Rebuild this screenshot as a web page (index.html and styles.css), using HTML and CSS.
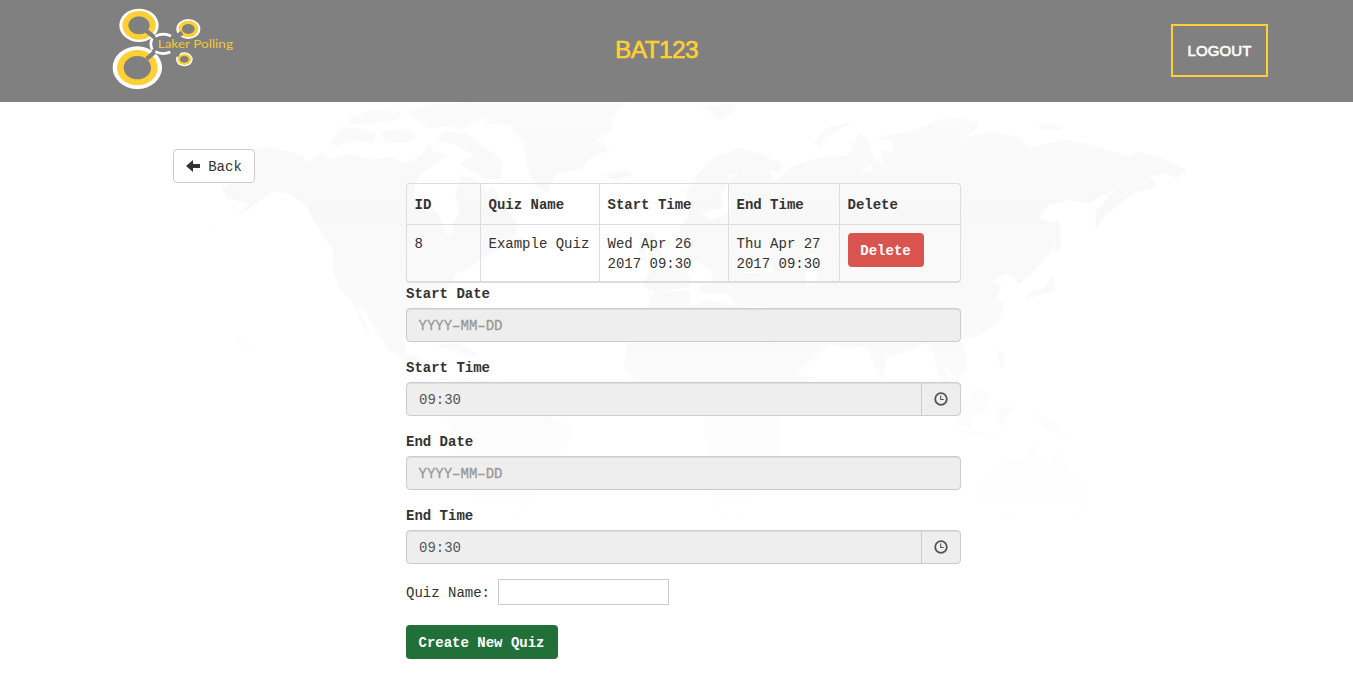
FILE: index.html
```html
<!DOCTYPE html>
<html lang="en">
<head>
<meta charset="utf-8">
<title>Laker Polling</title>
<link rel="stylesheet" href="styles.css">
</head>
<body>
<svg class="world-map" viewBox="0 0 1353 693" aria-hidden="true">
  <defs>
    <linearGradient id="fade" gradientUnits="userSpaceOnUse" x1="0" y1="100" x2="0" y2="540">
      <stop offset="0" stop-color="#fbfbfb"/><stop offset=".25" stop-color="#f8f8f8"/><stop offset=".55" stop-color="#fafafa"/><stop offset=".8" stop-color="#fdfdfd"/><stop offset="1" stop-color="#fff"/>
    </linearGradient>
    <clipPath id="land">
      <path transform="translate(190 100) scale(.33333)" d="M190 148L230 140L300 155L340 165L345 190L400 155L400 170L430 178L480 160L540 180L600 170L650 190L690 170L720 130L730 155L770 165L740 190L700 215L680 240L670 290L700 310L745 340L765 400L790 405L790 365L810 340L795 280L815 225L860 240L890 275L910 260L935 310L980 365L975 410L920 420L950 440L900 460L860 490L800 520L770 570L735 600L720 640L745 680L740 710L725 685L680 690L640 710L650 760L690 770L690 790L740 835L790 840L745 845L680 795L600 755L575 720L545 670L520 620L500 620L540 695L525 690L485 600L450 570L430 520L430 450L400 410L370 360L350 320L300 280L245 275L200 310L140 350L180 310L110 295L95 265L150 240L130 210L150 190Z
      M420 125L460 80L520 85L560 100L545 130L500 120L440 138ZM480 55L540 30L640 35L620 60L530 75L475 70ZM570 95L650 85L680 110L650 130L590 130ZM645 30L760 10L900 5L960 20L850 70L810 90L790 75L720 85L680 60ZM760 95L830 100L880 140L940 180L930 235L890 240L840 210L810 190L850 165L800 135L740 120Z
      M850 5L1310 5L1260 60L1270 90L1220 120L1260 150L1190 180L1180 205L1100 220L1070 280L1040 265L1015 210L1000 130L960 75L880 70L910 40ZM1250 220L1310 210L1325 225L1280 243L1250 232ZM940 415L1000 415L1010 435L970 440ZM1360 400L1385 395L1420 470L1380 480L1390 430ZM1350 430L1375 420L1365 460L1340 460ZM1370 520L1490 490L1500 560L1400 580L1360 560ZM1390 580L1500 570V945L1400 925L1330 840L1300 790L1320 700L1370 620ZM730 735L800 730L840 750L870 770L800 755ZM800 835L890 830L960 860L1000 910L1090 955L1150 980L1140 1020L1100 1070L1040 1120L1030 1190L970 1260L860 1260L860 1130L800 1070L770 950Z
      M140 710L155 718L148 725ZM165 725L182 735L175 742ZM65 375L75 371L70 380Z"/>
      <path transform="translate(680 100) scale(.338 .33333)" d="M0 380L25 350L20 270L50 225L100 170L180 145L220 155L300 190L300 215L260 210L280 245L330 200L390 180L430 170L500 165L530 100L555 115L580 190L530 210L560 215L580 175L605 200L590 150L630 155L625 120L580 120L610 105L680 95L740 70L800 50L880 65L885 85L830 115L920 95L1000 110L1030 145L1130 120L1200 130L1330 170L1350 155L1430 175L1500 210L1470 235L1430 220L1390 230L1410 260L1340 280L1300 310L1250 355L1230 390L1230 335L1290 265L1210 310L1150 300L1090 315L1060 355L1105 370L1105 440L1050 510L1000 555L990 530L960 520L920 545L950 560L935 600L960 610L945 660L900 700L860 715L830 720L850 770L850 810L820 840L790 800L780 810L830 880L870 940L860 990L810 950L770 850L750 760L720 730L670 755L610 775L600 840L575 800L555 740L500 745L440 735L390 780L330 830L270 740L250 620L170 620L140 580L60 580L55 560L100 550L90 510L30 470L0 480ZM140 260L115 290L130 320L60 340L90 360L150 340L145 240L175 215L140 230ZM170 500L260 480L280 515L190 520ZM370 470L400 460L405 550L375 560Z" clip-rule="evenodd"/>
      <path transform="translate(680 100) scale(.338 .33333)" d="M0 630L80 600L240 630L270 740L325 820L390 830L300 940L290 1060L230 1180L170 1260L100 1240L80 1050L70 950L0 940ZM395 130L430 85L520 62L430 110L415 145ZM65 20L150 10L165 35L115 60ZM1060 70L1130 75L1135 90L1070 90ZM1100 370L1120 360L1130 440L1110 455ZM1105 520L1110 570L1020 600L1040 575L1080 560ZM940 750L960 760L955 810L940 780ZM870 870L920 880L900 940L860 950L845 920ZM935 920L1000 920L960 950L970 990L940 970ZM1050 940L1100 955L1150 1010L1080 985ZM820 990L930 1000L920 1015L830 1000ZM960 1080L1020 1075L1040 1035L1060 1050L1060 1080L1095 1105L1120 1040L1140 1090L1200 1170L1200 1220L1150 1270L1050 1260L900 1240L880 1160Z"/>
    </clipPath>
  </defs>
  <rect class="map-land" width="1353" height="540" clip-path="url(#land)"/>
</svg>

<header class="topbar">
  <svg class="logo" width="150" height="102" viewBox="0 0 450 306" aria-label="Laker Polling">
    <g class="logo-white"><ellipse cx="117" cy="76" rx="59" ry="50"/><ellipse cx="112" cy="203" rx="74" ry="64"/><ellipse cx="265" cy="87" rx="36" ry="30"/><ellipse cx="253" cy="178" rx="25" ry="21"/></g>
    <g class="logo-yellow"><ellipse cx="117" cy="76" rx="50" ry="43"/><ellipse cx="112" cy="203" rx="61" ry="53"/><ellipse cx="265" cy="87" rx="30" ry="25"/><ellipse cx="253" cy="178" rx="21" ry="17"/></g>
    <g class="logo-grey"><ellipse cx="117" cy="76" rx="32" ry="27"/><ellipse cx="112" cy="203" rx="41" ry="35"/><ellipse cx="265" cy="87" rx="19" ry="15"/><ellipse cx="253" cy="178" rx="13" ry="10"/></g>
    <path class="logo-link" d="M138 92L176 122M140 177L176 145M247 99L212 119M238 165L215 154"/>
    <path class="logo-hub" d="M166 109Q189 96 213 108M157 115Q148 131 157 149M166 155Q187 166 211 156"/>
    <text class="logo-text" x="173" y="145" textLength="226" lengthAdjust="spacingAndGlyphs">Laker Polling</text>
  </svg>
  <h1 class="course">BAT123</h1>
  <button class="logout">LOGOUT</button>
</header>

<main class="page">
  <button class="btn back"><svg width="14" height="12" viewBox="0 0 14 12"><path d="M0 6L7 0V4H14V8H7V12Z" fill="#333"/></svg><span>Back</span></button>
  <section class="content">
    <table class="quizzes">
      <colgroup><col class="c-id"><col class="c-name"><col class="c-start"><col class="c-end"><col></colgroup>
      <thead><tr><th>ID</th><th>Quiz Name</th><th>Start Time</th><th>End Time</th><th>Delete</th></tr></thead>
      <tbody><tr><td>8</td><td>Example Quiz</td><td>Wed Apr 26<br>2017 09:30</td><td>Thu Apr 27<br>2017 09:30</td><td class="action"><button class="btn danger">Delete</button></td></tr></tbody>
    </table>
    <div class="field"><label>Start Date</label><div class="control placeholder">YYYY–MM–DD</div></div>
    <div class="field"><label>Start Time</label><div class="control"><span class="value">09:30</span><span class="addon"><svg width="14" height="14" viewBox="0 0 14 14"><circle cx="7" cy="7" r="5.8"/><path d="M6.7 3.4V7.5H9.8"/></svg></span></div></div>
    <div class="field"><label>End Date</label><div class="control placeholder">YYYY–MM–DD</div></div>
    <div class="field"><label>End Time</label><div class="control"><span class="value">09:30</span><span class="addon"><svg width="14" height="14" viewBox="0 0 14 14"><circle cx="7" cy="7" r="5.8"/><path d="M6.7 3.4V7.5H9.8"/></svg></span></div></div>
    <div class="name-row"><label for="quiz-name">Quiz Name:</label><input id="quiz-name" type="text"></div>
    <button class="btn create">Create New Quiz</button>
  </section>
</main>
</body>
</html>
```
FILE: styles.css
```css
* { box-sizing: border-box; }
body { margin: 0; height: 693px; overflow: hidden; background: #fff; color: #333; font: 14px/20px "Liberation Mono", "Courier New", monospace; }
button { font: inherit; }
.world-map { position: absolute; top: 0; left: 0; z-index: -1; width: 1353px; height: 693px; }
.map-land { fill: url(#fade); }

.topbar { height: 102px; padding: 0 85px 0 100px; background: #808080; display: grid; grid-template-columns: 515px 1fr auto; align-items: start; }
.logo { display: block; }
.logo-white { fill: #fff; }
.logo-yellow { fill: #ffd034; }
.logo-grey { fill: #808080; }
.logo-hub { fill: none; stroke: #fff; stroke-width: 8; }
.logo-link { stroke: #808080; stroke-width: 13; fill: none; }
.logo-text { font: 34px Lato, sans-serif; fill: #f2c83a; }
.course { margin: 36px 0 0; color: #ffd034; font: 400 24.5px/28px "Liberation Sans", Arial, sans-serif; letter-spacing: -.6px; -webkit-text-stroke: .6px #ffd034; }
.logout { width: 97px; height: 53px; margin-top: 24px; padding: 0; border: 2px solid #ffd034; background: none; color: #fff; font: 500 15px/20px "Liberation Sans", Arial, sans-serif; letter-spacing: .1px; -webkit-text-stroke: .6px #fff; }

.page { display: flex; align-items: flex-start; padding: 47px 0 0 173px; }
.btn { height: 34px; padding: 2px 13px 0 12px; border: 0; border-radius: 4px; color: #fff; font-weight: 700; line-height: 32px; white-space: nowrap; display: flex; align-items: center; justify-content: center; }
.back { width: 82px; padding: 0 12px; gap: 8px; border: 1px solid #ccc; background: #fff; color: #333; font-weight: 400; line-height: 30px; }
.back span { padding-top: 2px; }
.content { width: 555px; margin: 34px 0 0 151px; }

.quizzes { width: 555px; height: 100px; table-layout: fixed; border: 1px solid #ddd; border-bottom-width: 2px; border-radius: 4px; border-collapse: separate; border-spacing: 0; }
.quizzes th, .quizzes td { padding: 9px 7px 7px 7.5px; text-align: left; vertical-align: top; white-space: nowrap; }
.quizzes th { height: 41px; padding-top: 11px; border-bottom: 1px solid #ddd; }
.quizzes td { height: 56px; }
.quizzes td.action { padding: 8px; }
.quizzes th + th, .quizzes td + td { border-left: 1px solid #ddd; }
.c-id { width: 73px; }
.c-name { width: 119px; }
.c-start { width: 129px; }
.c-end { width: 111px; }
.danger { width: 76px; background: #d9534f; }

.field { margin-bottom: 15px; }
.field label { display: block; height: 20px; margin-bottom: 5px; padding-top: 1px; font-weight: 700; }
.control { height: 34px; padding-left: 12px; display: flex; align-items: center; border: 1px solid #ccc; border-radius: 4px; background: #eee; color: #555; box-shadow: inset 0 1px 1px rgba(0, 0, 0, .075); }
.value { padding-top: 2px; }
.placeholder { padding: 2px 0 0 11.5px; color: #999; -webkit-text-stroke: .3px #999; }
.addon { width: 39px; height: 32px; margin-left: auto; padding-right: 1px; display: flex; align-items: center; justify-content: center; border-left: 1px solid #ccc; }
.addon svg { fill: none; stroke: #555; stroke-width: 1.8; }
.addon path { stroke-width: 1.1; }
.name-row { display: flex; align-items: center; gap: 8px; margin-bottom: 20px; }
.name-row label { padding-top: 2px; }
.name-row input { width: 171px; height: 26px; padding: 2px; border: 1px solid #ccc; background: #fff; font: inherit; }
.create { width: 152px; background: #21703a; }
```
